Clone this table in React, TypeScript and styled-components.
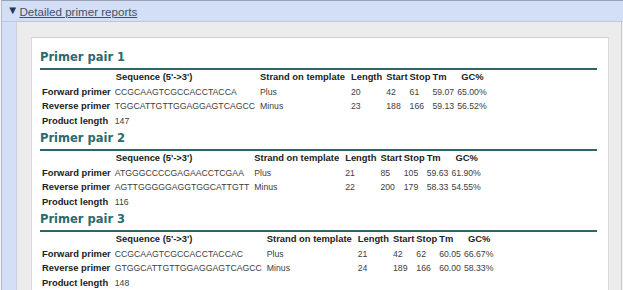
import styled, { createGlobalStyle } from 'styled-components';

const GlobalStyle = createGlobalStyle`
  html, body {
    margin: 0;
    padding: 0;
    height: 290px;
    overflow: hidden;
    background: #f2f2f2;
  }
`;

type Primer = {
  label: string;
  seq: string;
  strand: string;
  length: number;
  start: number;
  stop: number;
  tm: string;
  gc: string;
};

type Pair = {
  id: number;
  primers: Primer[];
  product: number;
};

const pairs: Pair[] = [
  {
    id: 1,
    product: 147,
    primers: [
      { label: 'Forward primer', seq: 'CCGCAAGTCGCCACCTACCA', strand: 'Plus', length: 20, start: 42, stop: 61, tm: '59.07', gc: '65.00%' },
      { label: 'Reverse primer', seq: 'TGGCATTGTTGGAGGAGTCAGCC', strand: 'Minus', length: 23, start: 188, stop: 166, tm: '59.13', gc: '56.52%' },
    ],
  },
  {
    id: 2,
    product: 116,
    primers: [
      { label: 'Forward primer', seq: 'ATGGGCCCCGAGAACCTCGAA', strand: 'Plus', length: 21, start: 85, stop: 105, tm: '59.63', gc: '61.90%' },
      { label: 'Reverse primer', seq: 'AGTTGGGGGAGGTGGCATTGTT', strand: 'Minus', length: 22, start: 200, stop: 179, tm: '58.33', gc: '54.55%' },
    ],
  },
  {
    id: 3,
    product: 148,
    primers: [
      { label: 'Forward primer', seq: 'CCGCAAGTCGCCACCTACCAC', strand: 'Plus', length: 21, start: 42, stop: 62, tm: '60.05', gc: '66.67%' },
      { label: 'Reverse primer', seq: 'GTGGCATTGTTGGAGGAGTCAGCC', strand: 'Minus', length: 24, start: 189, stop: 166, tm: '60.00', gc: '58.33%' },
    ],
  },
];

const Frame = styled.div`
  width: 623px;
  height: 290px;
  box-sizing: border-box;
  border-top: 1px solid #9aa3b4;
  border-left: 1px solid #b4bccb;
  margin-left: 1px;
  background: #d3dff6;
  display: flex;
  flex-direction: column;
  font-family: "Liberation Sans", Arial, sans-serif;
`;

const Toggle = styled.div`
  height: 20px;
  display: flex;
  align-items: center;
  gap: 1px;
  padding-left: 5px;
  border-bottom: 1px solid #bfc8d8;
  font-size: 11.6px;
`;

const Arrow = styled.span`
  color: #22375c;
  font-size: 11.5px;
  line-height: 1;
`;

const ToggleLink = styled.a`
  color: #45516a;
  text-decoration: underline;
  cursor: pointer;
`;

const Body = styled.div`
  flex: 1;
  margin-left: 14px;
  border-left: 1px solid #c9d1de;
  background: #ececec;
  padding: 15px 15px 0 14px;
  box-shadow: inset -2px 0 #f3f3f3, inset -3px 0 #c7c7c7;
`;

const Card = styled.div`
  background: #fff;
  border-top: 1px solid #cfcfcf;
  border-left: 1px solid #dadada;
  border-right: 1px solid #dadada;
  height: 100%;
  box-sizing: border-box;
  padding: 11px 11px 0 8px;
`;

const Section = styled.section`
  & + & {
    margin-top: 2px;
  }
`;

const Heading = styled.h3`
  margin: 0;
  font-family: "DejaVu Sans", Verdana, sans-serif;
  font-size: 11.5px;
  font-weight: bold;
  line-height: 16px;
  color: #2a6a70;
  padding-bottom: 3px;
  border-bottom: 2px solid #2f6469;
`;

const Table = styled.table`
  border-collapse: collapse;
  border-spacing: 0;
  font-size: 8.7px;
  color: #404040;
`;

const Th = styled.th<{ $pad?: number; $lead?: number }>`
  font-weight: bold;
  font-size: 9.4px;
  color: #222;
  text-align: left;
  line-height: 14.5px;
  padding: 0 ${(p) => p.$pad ?? 1}px 0 ${(p) => p.$lead ?? 1}px;
  white-space: nowrap;
`;

const Td = styled.td<{ $pad?: number }>`
  line-height: 14.5px;
  padding: 0 ${(p) => p.$pad ?? 1}px 0 1px;
  white-space: nowrap;
`;

const RowLabel = styled.th`
  font-weight: bold;
  font-size: 9.4px;
  color: #222;
  text-align: left;
  line-height: 14.5px;
  padding: 0 3px 0 2px;
  white-space: nowrap;
`;

const PairReport = ({ pair }: { pair: Pair }) => (
  <Section>
    <Heading>Primer pair {pair.id}</Heading>
    <Table>
      <thead>
        <tr>
          <th />
          <Th $pad={4} $lead={2}>Sequence (5'-&gt;3')</Th>
          <Th $pad={5}>Strand on template</Th>
          <Th $pad={3}>Length</Th>
          <Th>Start</Th>
          <Th>Stop</Th>
          <Th $pad={2}>Tm</Th>
          <Th $lead={5}>GC%</Th>
        </tr>
      </thead>
      <tbody>
        {pair.primers.map((p) => (
          <tr key={p.label}>
            <RowLabel>{p.label}</RowLabel>
            <Td $pad={4}>{p.seq}</Td>
            <Td $pad={5}>{p.strand}</Td>
            <Td $pad={3}>{p.length}</Td>
            <Td>{p.start}</Td>
            <Td>{p.stop}</Td>
            <Td $pad={2}>{p.tm}</Td>
            <Td>{p.gc}</Td>
          </tr>
        ))}
        <tr>
          <RowLabel>Product length</RowLabel>
          <Td>{pair.product}</Td>
        </tr>
      </tbody>
    </Table>
  </Section>
);

const App = () => (
  <>
    <GlobalStyle />
    <Frame>
      <Toggle>
        <Arrow>▼</Arrow>
        <ToggleLink>Detailed primer reports</ToggleLink>
      </Toggle>
      <Body>
        <Card>
          {pairs.map((pair) => (
            <PairReport key={pair.id} pair={pair} />
          ))}
        </Card>
      </Body>
    </Frame>
  </>
);

export default App;
